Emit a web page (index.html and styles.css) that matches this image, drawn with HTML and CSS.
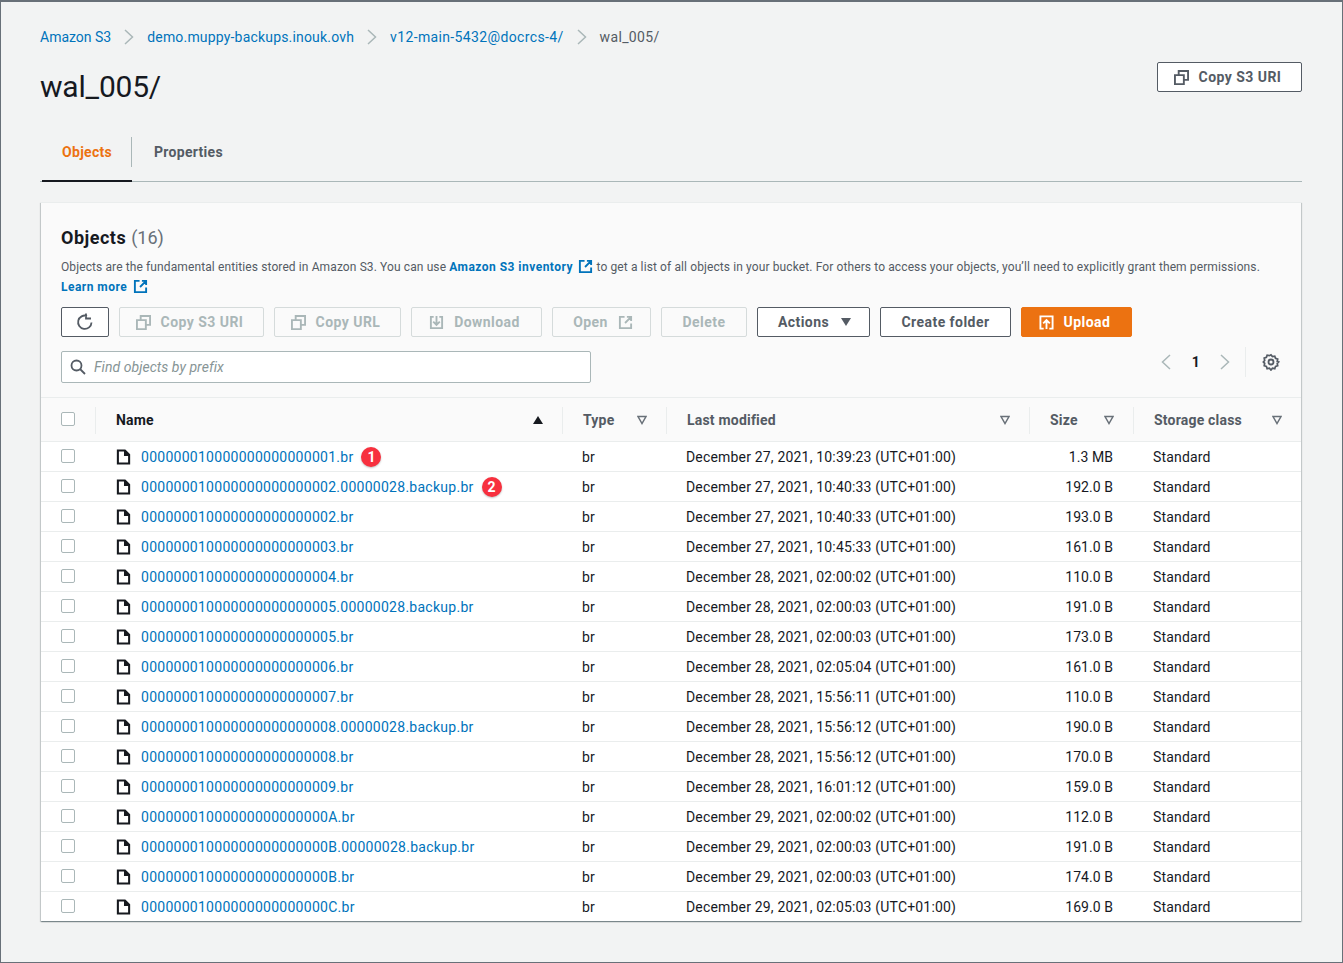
FILE: index.html
```html
<!DOCTYPE html>
<html lang="en">
<head>
<meta charset="UTF-8">
<title>wal_005/ - S3 bucket</title>
<link rel="stylesheet" href="styles.css">
</head>
<body>
<svg class="icon-defs" width="0" height="0">
    <symbol id="i-copy" viewBox="0 0 16 16"><path d="M1 5.500h9.500v9.500H1zM5 5V1h10v9.500H11" fill="none" stroke="currentColor" stroke-width="2"/></symbol>
    <symbol id="i-file" viewBox="0 0 16 16"><path d="M2 1h7.500L14 5.500V15H2z" fill="none" stroke="currentColor" stroke-width="2.200"/><path d="M8.500 1h1.500L14.500 5.500V7h-6z" fill="currentColor"/></symbol>
    <symbol id="i-ext" viewBox="0 0 16 16"><path d="M7 2H2v12h12V9M9.500 2H14v4.500M14 2L7.500 8.500" fill="none" stroke="currentColor" stroke-width="2"/></symbol>
    <symbol id="i-filter" viewBox="0 0 10 10"><path d="M1 1.500h8L5 8.500z" fill="none" stroke="currentColor" stroke-width="1.500"/></symbol>
    <symbol id="i-chev" viewBox="0 0 12 18"><path d="M2 2l7.500 7L2 16" fill="none" stroke="currentColor" stroke-width="1.500"/></symbol>
</svg>

<div class="page">
    <!-- Breadcrumbs -->
    <nav class="crumbs">
        <a class="crumb-root" href="#">Amazon S3</a>
        <svg class="crumb-sep"><use href="#i-chev"/></svg>
        <a href="#">demo.muppy-backups.inouk.ovh</a>
        <svg class="crumb-sep"><use href="#i-chev"/></svg>
        <a class="crumb-wide" href="#">v12-main-5432@docrcs-4/</a>
        <svg class="crumb-sep"><use href="#i-chev"/></svg>
        <span class="crumb-wide">wal_005/</span>
    </nav>

    <div class="title-row">
        <h1>wal_005/</h1>
        <button class="btn btn-lead btn-title"><svg class="btn-icon"><use href="#i-copy"/></svg>Copy S3 URI</button>
    </div>

    <div class="tabs">
        <a class="tab tab-active" href="#">Objects</a>
        <a class="tab" href="#">Properties</a>
    </div>

    <!-- Objects card -->
    <section class="card">
        <div class="card-head">
            <h2>Objects <span class="count">(16)</span></h2>
            <p class="desc">Objects are the fundamental entities stored in Amazon S3. You can use <a href="#">Amazon S3 inventory <svg class="ext"><use href="#i-ext"/></svg></a> to get a list of all objects in your bucket. For others to access your objects, you’ll need to explicitly grant them permissions.<br><a href="#">Learn more <svg class="ext"><use href="#i-ext"/></svg></a></p>

            <div class="toolbar">
                <button class="btn btn-refresh" aria-label="Refresh">
                    <svg width="18" height="18" viewBox="0 0 18 18"><path d="M15.500 9.500A6.700 6.700 0 1 1 11 2.900M10 .5v5h5" fill="none" stroke="currentColor" stroke-width="1.800"/></svg>
                </button>
                <button class="btn btn-lead btn-off btn-uri"><svg class="btn-icon"><use href="#i-copy"/></svg>Copy S3 URI</button>
                <button class="btn btn-lead btn-off btn-url"><svg class="btn-icon"><use href="#i-copy"/></svg>Copy URL</button>
                <button class="btn btn-lead btn-off btn-down">
                    <svg class="btn-icon" viewBox="0 0 16 16"><path d="M5 2H2v12h12V2h-3M8 1v9M4.500 7L8 10.500 11.500 7" fill="none" stroke="currentColor" stroke-width="2"/></svg>Download
                </button>
                <button class="btn btn-off btn-open">Open<svg class="btn-icon btn-icon-right"><use href="#i-ext"/></svg></button>
                <button class="btn btn-off btn-delete">Delete</button>
                <button class="btn btn-actions">Actions<span class="caret"></span></button>
                <button class="btn btn-folder">Create folder</button>
                <button class="btn btn-lead btn-upload">
                    <svg class="btn-icon" viewBox="0 0 16 16"><path d="M5 14.500H1.500v-13h13v13H11M8 15V6M4.500 9L8 5.500 11.500 9" fill="none" stroke="currentColor" stroke-width="2"/></svg>Upload
                </button>
            </div>

            <div class="search-row">
                <div class="search">
                    <svg width="16" height="16" viewBox="0 0 16 16"><circle cx="6.500" cy="6.500" r="5" fill="none" stroke="currentColor" stroke-width="1.800"/><path d="M10 10l5 5" stroke="currentColor" stroke-width="1.800"/></svg>
                    <span>Find objects by prefix</span>
                </div>
                <div class="pager">
                    <svg class="pager-prev"><use href="#i-chev"/></svg>
                    <span class="pager-num">1</span>
                    <svg class="pager-next"><use href="#i-chev"/></svg>
                    <span class="pager-line"></span>
                    <svg class="gear" width="18" height="18" viewBox="0 0 18 18"><path d="M9 1.500l1.600 1.900 2.400-.5.800 2.300 2.300.8-.5 2.500L17 9l-1.400 1.500.5 2.500-2.300.8-.8 2.300-2.400-.5L9 17.500l-1.600-1.900-2.400.5-.8-2.300-2.300-.8.5-2.500L1 9l1.400-1.500-.5-2.500 2.300-.8.8-2.300 2.400.5z" transform="translate(.4 .4) scale(.95)" fill="none" stroke="currentColor" stroke-width="1.800"/><circle cx="9" cy="9" r="2.500" fill="none" stroke="currentColor" stroke-width="1.800"/></svg>
                </div>
            </div>
        </div>

        <table class="objects">
            <colgroup>
                <col class="c-check"><col class="c-name"><col class="c-type"><col class="c-date"><col class="c-size"><col class="c-class">
            </colgroup>
            <thead>
                <tr>
                    <th><span class="box"></span></th>
                    <th class="th-name"><span class="th-in">Name<span class="sort-up"></span></span></th>
                    <th><span class="th-in">Type<svg class="filter"><use href="#i-filter"/></svg></span></th>
                    <th><span class="th-in">Last modified<svg class="filter"><use href="#i-filter"/></svg></span></th>
                    <th><span class="th-in">Size<svg class="filter"><use href="#i-filter"/></svg></span></th>
                    <th><span class="th-in">Storage class<svg class="filter"><use href="#i-filter"/></svg></span></th>
                </tr>
            </thead>
            <tbody>
                <tr><td><span class="box"></span></td><td class="td-name"><svg class="file"><use href="#i-file"/></svg><a href="#">000000010000000000000001.br</a><span class="pin pin-1">1</span></td><td>br</td><td>December 27, 2021, 10:39:23 (UTC+01:00)</td><td class="num">1.3 MB</td><td>Standard</td></tr>
                <tr><td><span class="box"></span></td><td class="td-name"><svg class="file"><use href="#i-file"/></svg><a href="#">000000010000000000000002.00000028.backup.br</a><span class="pin pin-2">2</span></td><td>br</td><td>December 27, 2021, 10:40:33 (UTC+01:00)</td><td class="num">192.0 B</td><td>Standard</td></tr>
                <tr><td><span class="box"></span></td><td class="td-name"><svg class="file"><use href="#i-file"/></svg><a href="#">000000010000000000000002.br</a></td><td>br</td><td>December 27, 2021, 10:40:33 (UTC+01:00)</td><td class="num">193.0 B</td><td>Standard</td></tr>
                <tr><td><span class="box"></span></td><td class="td-name"><svg class="file"><use href="#i-file"/></svg><a href="#">000000010000000000000003.br</a></td><td>br</td><td>December 27, 2021, 10:45:33 (UTC+01:00)</td><td class="num">161.0 B</td><td>Standard</td></tr>
                <tr><td><span class="box"></span></td><td class="td-name"><svg class="file"><use href="#i-file"/></svg><a href="#">000000010000000000000004.br</a></td><td>br</td><td>December 28, 2021, 02:00:02 (UTC+01:00)</td><td class="num">110.0 B</td><td>Standard</td></tr>
                <tr><td><span class="box"></span></td><td class="td-name"><svg class="file"><use href="#i-file"/></svg><a href="#">000000010000000000000005.00000028.backup.br</a></td><td>br</td><td>December 28, 2021, 02:00:03 (UTC+01:00)</td><td class="num">191.0 B</td><td>Standard</td></tr>
                <tr><td><span class="box"></span></td><td class="td-name"><svg class="file"><use href="#i-file"/></svg><a href="#">000000010000000000000005.br</a></td><td>br</td><td>December 28, 2021, 02:00:03 (UTC+01:00)</td><td class="num">173.0 B</td><td>Standard</td></tr>
                <tr><td><span class="box"></span></td><td class="td-name"><svg class="file"><use href="#i-file"/></svg><a href="#">000000010000000000000006.br</a></td><td>br</td><td>December 28, 2021, 02:05:04 (UTC+01:00)</td><td class="num">161.0 B</td><td>Standard</td></tr>
                <tr><td><span class="box"></span></td><td class="td-name"><svg class="file"><use href="#i-file"/></svg><a href="#">000000010000000000000007.br</a></td><td>br</td><td>December 28, 2021, 15:56:11 (UTC+01:00)</td><td class="num">110.0 B</td><td>Standard</td></tr>
                <tr><td><span class="box"></span></td><td class="td-name"><svg class="file"><use href="#i-file"/></svg><a href="#">000000010000000000000008.00000028.backup.br</a></td><td>br</td><td>December 28, 2021, 15:56:12 (UTC+01:00)</td><td class="num">190.0 B</td><td>Standard</td></tr>
                <tr><td><span class="box"></span></td><td class="td-name"><svg class="file"><use href="#i-file"/></svg><a href="#">000000010000000000000008.br</a></td><td>br</td><td>December 28, 2021, 15:56:12 (UTC+01:00)</td><td class="num">170.0 B</td><td>Standard</td></tr>
                <tr><td><span class="box"></span></td><td class="td-name"><svg class="file"><use href="#i-file"/></svg><a href="#">000000010000000000000009.br</a></td><td>br</td><td>December 28, 2021, 16:01:12 (UTC+01:00)</td><td class="num">159.0 B</td><td>Standard</td></tr>
                <tr><td><span class="box"></span></td><td class="td-name"><svg class="file"><use href="#i-file"/></svg><a href="#">00000001000000000000000A.br</a></td><td>br</td><td>December 29, 2021, 02:00:02 (UTC+01:00)</td><td class="num">112.0 B</td><td>Standard</td></tr>
                <tr><td><span class="box"></span></td><td class="td-name"><svg class="file"><use href="#i-file"/></svg><a href="#">00000001000000000000000B.00000028.backup.br</a></td><td>br</td><td>December 29, 2021, 02:00:03 (UTC+01:00)</td><td class="num">191.0 B</td><td>Standard</td></tr>
                <tr><td><span class="box"></span></td><td class="td-name"><svg class="file"><use href="#i-file"/></svg><a href="#">00000001000000000000000B.br</a></td><td>br</td><td>December 29, 2021, 02:00:03 (UTC+01:00)</td><td class="num">174.0 B</td><td>Standard</td></tr>
                <tr><td><span class="box"></span></td><td class="td-name"><svg class="file"><use href="#i-file"/></svg><a href="#">00000001000000000000000C.br</a></td><td>br</td><td>December 29, 2021, 02:05:03 (UTC+01:00)</td><td class="num">169.0 B</td><td>Standard</td></tr>
            </tbody>
        </table>
    </section>
</div>
</body>
</html>
```

FILE: styles.css
```css
/* Page frame */
* {
    box-sizing: border-box;
}
html, body {
    margin: 0;
    height: 100%;
}
body {
    font-family: Roboto, "Open Sans", sans-serif;
    font-size: 14px;
    letter-spacing: 0.18px;
    color: #16191f;
    background-color: #f2f3f3;
}
a {
    color: #0073bb;
    text-decoration: none;
}
.icon-defs {
    position: absolute;
}
.page {
    height: 963px;
    padding: 0 40px 0 39px;
    border: 1px solid #687078;
    border-top: 2px solid #687078;
    overflow: hidden;
}

/* Breadcrumbs */
.crumbs {
    display: flex;
    align-items: center;
    height: 20px;
    margin-top: 25px;
    color: #545b64;
}
.crumb-root {
    letter-spacing: 0;
}
.crumb-wide {
    letter-spacing: 0.36px;
}
.crumb-sep {
    width: 12px;
    height: 18px;
    margin: 0 12px 0 12px;
    color: #aab7b8;
}

/* Title */
.title-row {
    display: flex;
    justify-content: space-between;
    height: 60px;
}
h1 {
    margin: 22px 0 0;
    font-size: 30px;
    font-weight: 400;
    line-height: 36px;
    letter-spacing: -0.2px;
}

/* Buttons */
.btn {
    display: inline-flex;
    align-items: center;
    justify-content: center;
    height: 30px;
    padding: 0;
    border: 1px solid #545b64;
    border-radius: 2px;
    background-color: #fff;
    color: #545b64;
    font-family: inherit;
    font-size: 14px;
    font-weight: 700;
    letter-spacing: 0.45px;
}
.btn-lead {
    padding-right: 4px;
}
.btn-icon {
    width: 15px;
    height: 15px;
    margin-right: 10px;
}
.btn-icon-right {
    margin: 0 0 0 10px;
}
.btn-title {
    width: 145px;
    margin-top: 15px;
}
.btn-off {
    border-color: #d5dbdb;
    background-color: #fafafa;
    color: #aab7b8;
}
.btn-refresh {
    width: 48px;
}
.btn-uri {
    width: 145px;
}
.btn-url {
    width: 127px;
}
.btn-down {
    width: 131px;
}
.btn-open {
    width: 99px;
    padding-left: 3px;
}
.btn-delete {
    width: 86px;
}
.btn-actions {
    width: 113px;
    padding-left: 2px;
}
.btn-folder {
    width: 131px;
}
.btn-upload {
    width: 111px;
    border-color: #ec7211;
    background-color: #ec7211;
    color: #fff;
}
.caret {
    width: 0;
    height: 0;
    margin-left: 12px;
    border-left: 5.5px solid transparent;
    border-right: 5.5px solid transparent;
    border-top: 8px solid #545b64;
}

/* Tabs */
.tabs {
    display: flex;
    height: 50px;
    margin-top: 25px;
    border-bottom: 1px solid #aab7b8;
}
.tab {
    position: relative;
    height: 50px;
    padding: 12px 22px 0;
    color: #545b64;
    font-weight: 700;
    letter-spacing: 0.3px;
}
.tab-active {
    width: 90px;
    margin-left: 2px;
    padding-left: 20px;
    padding-right: 0;
    color: #ec7211;
    border-bottom: 2px solid #16191f;
}
.tab-active::after {
    content: "";
    position: absolute;
    right: 0;
    top: 5px;
    height: 30px;
    border-right: 1px solid #aab7b8;
}

/* Card */
.card {
    width: 1260px;
    margin-top: 20px;
    margin-left: 1px;
    background-color: #fafafa;
    border-top: 1px solid #eaeded;
    box-shadow: 0 1px 1px 0 rgba(0, 28, 36, 0.3), 1px 1px 1px 0 rgba(0, 28, 36, 0.15), -1px 1px 1px 0 rgba(0, 28, 36, 0.15);
}
.card-head {
    height: 195px;
    padding: 22px 20px 0;
    border-bottom: 1px solid #eaeded;
}
h2 {
    margin: 0;
    font-size: 18px;
    font-weight: 700;
    line-height: 26px;
    letter-spacing: 0.5px;
}
.count {
    font-weight: 400;
    color: #687078;
    letter-spacing: 0;
}
.desc {
    margin: 6px 0 0;
    font-size: 12px;
    line-height: 20px;
    letter-spacing: 0.11px;
    color: #545b64;
}
.desc a {
    font-weight: 700;
    letter-spacing: 0.47px;
}
.ext {
    width: 15px;
    height: 15px;
    margin-left: 2px;
    vertical-align: -3px;
}
.toolbar {
    display: flex;
    gap: 10px;
    margin-top: 10px;
}

/* Search and pager */
.search-row {
    display: flex;
    justify-content: space-between;
    margin-top: 14px;
}
.search {
    display: flex;
    align-items: center;
    gap: 8px;
    width: 530px;
    height: 32px;
    padding-left: 8px;
    border: 1px solid #aab7b8;
    border-radius: 2px;
    background-color: #fff;
    color: #545b64;
}
.search span {
    color: #879596;
    font-style: italic;
    letter-spacing: 0.05px;
}
.pager {
    display: flex;
    align-items: center;
    height: 30px;
    margin-top: -4px;
    color: #16191f;
}
.pager-prev, .pager-next {
    width: 12px;
    height: 18px;
    color: #aab7b8;
}
.pager-prev {
    transform: scaleX(-1);
}
.pager-num {
    margin: 0 19px 0 20px;
    font-weight: 700;
}
.pager-line {
    height: 30px;
    margin: 0 16px 0 14px;
    border-left: 1px solid #eaeded;
}
.gear {
    margin-right: 1px;
    color: #545b64;
}

/* Objects table */
.objects {
    width: 100%;
    border-collapse: collapse;
    table-layout: fixed;
}
.c-check {
    width: 54px;
}
.c-name {
    width: 467px;
}
.c-type {
    width: 104px;
}
.c-date {
    width: 363px;
}
.c-size {
    width: 104px;
}
.objects th {
    height: 43px;
    padding: 2px 0 0;
    border-bottom: 1px solid #eaeded;
    text-align: left;
    color: #545b64;
    font-weight: 700;
    letter-spacing: 0.2px;
}
.objects th:first-child {
    padding-left: 20px;
}
.objects th .box {
    margin-bottom: 2px;
}
.th-in {
    display: flex;
    align-items: center;
    justify-content: space-between;
    height: 27px;
    padding: 0 19px 0 20px;
    border-left: 1px solid #eaeded;
}
.th-name {
    color: #16191f !important;
}
.filter {
    width: 10px;
    height: 10px;
    color: #687078;
}
.sort-up {
    width: 0;
    height: 0;
    border-left: 5px solid transparent;
    border-right: 5px solid transparent;
    border-bottom: 8px solid #16191f;
}
.objects td {
    height: 30px;
    padding: 2px 0 0 20px;
    background-color: #fff;
    border-bottom: 1px solid #eaeded;
    white-space: nowrap;
}
.objects tr:last-child td {
    border-bottom: none;
}
.objects td.td-name {
    padding-left: 21px;
}
.td-name a {
    letter-spacing: 0.27px;
}
.objects td.num {
    padding: 2px 20px 0 0;
    text-align: right;
    letter-spacing: 0.05px;
}
.file {
    width: 15px;
    height: 16px;
    margin-right: 10px;
    vertical-align: -3px;
    color: #16191f;
}
.box {
    display: block;
    width: 14px;
    height: 14px;
    margin-bottom: 2px;
    border: 1px solid #aab7b8;
    border-radius: 2px;
    background-color: #fff;
}

/* Numbered marks on the screenshot */
.pin {
    display: inline-block;
    width: 20px;
    height: 20px;
    margin-left: 8px;
    border-radius: 50%;
    background-color: #f7303e;
    color: #fff;
    font-size: 14px;
    font-weight: 700;
    line-height: 20px;
    letter-spacing: 0;
    text-align: center;
    box-shadow: 0 1px 2px rgba(0, 0, 0, 0.25);
}
```
